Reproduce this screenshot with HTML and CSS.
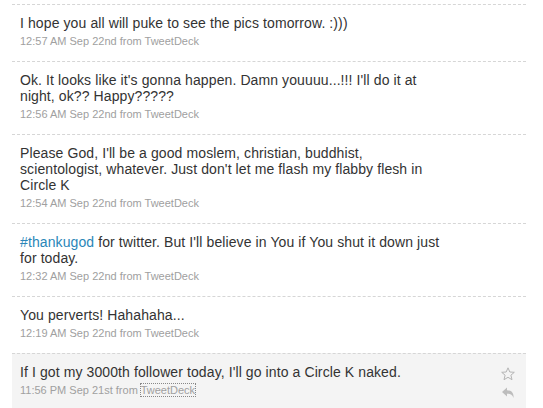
FILE: index.html
```html
<!DOCTYPE html>
<html>
<head>
<meta charset="utf-8">
<link rel="stylesheet" href="styles.css">
</head>
<body>
<ol class="timeline">
  <li class="status">
    <div class="body">
      <span class="content">I hope you all will puke to see the pics tomorrow. :)))</span>
      <span class="meta">12:57 AM Sep 22nd from <a class="src">TweetDeck</a></span>
    </div>
  </li>
  <li class="status">
    <div class="body">
      <span class="content">Ok. It looks like it's gonna happen. Damn youuuu...!!! I'll do it at night, ok?? Happy?????</span>
      <span class="meta">12:56 AM Sep 22nd from <a class="src">TweetDeck</a></span>
    </div>
  </li>
  <li class="status">
    <div class="body">
      <span class="content">Please God, I'll be a good moslem, christian, buddhist, scientologist, whatever. Just don't let me flash my flabby flesh in Circle K</span>
      <span class="meta">12:54 AM Sep 22nd from <a class="src">TweetDeck</a></span>
    </div>
  </li>
  <li class="status">
    <div class="body">
      <span class="content"><a class="tag">#thankugod</a> for twitter. But I'll believe in You if You shut it down just for today.</span>
      <span class="meta">12:32 AM Sep 22nd from <a class="src">TweetDeck</a></span>
    </div>
  </li>
  <li class="status">
    <div class="body">
      <span class="content">You perverts! Hahahaha...</span>
      <span class="meta">12:19 AM Sep 22nd from <a class="src">TweetDeck</a></span>
    </div>
  </li>
  <li class="status hover">
    <div class="body">
      <span class="content">If I got my 3000th follower today, I'll go into a Circle K naked.</span>
      <span class="meta">11:56 PM Sep 21st from <a class="src focus">TweetDeck</a></span>
    </div>
    <div class="actions">
      <svg class="star" width="14" height="14" viewBox="0 0 14 14"><path d="M7 0.8 L8.8 5 L13.3 5.3 L9.9 8.2 L11 12.7 L7 10.3 L3 12.7 L4.1 8.2 L0.7 5.3 L5.2 5 Z" fill="none" stroke="#b5b5b5" stroke-width="1"/></svg>
      <svg class="reply" width="14" height="16" viewBox="0 0 14 16"><path d="M1 5 L6 0.5 L6 3.2 C10 3.2 13 5.5 12.5 11 C11.5 7.5 9 6.8 6 6.8 L6 9.5 Z" fill="#bdbdbd"/></svg>
    </div>
  </li>
</ol>
</body>
</html>
```

FILE: styles.css
```css
html, body {
  margin: 0;
  padding: 0;
  background: #fff;
}
body {
  font-family: "Liberation Sans", Arial, sans-serif;
  color: #333;
  overflow: hidden;
}
.timeline {
  list-style: none;
  margin: 4px 0 0 12px;
  padding: 0;
  width: 514px;
}
.status {
  border-top: 1px dashed #d6d6d6;
  padding: 10px 8px 13px 8px;
  display: flex;
  justify-content: space-between;
}
.status.hover {
  background: #f4f4f4;
}
.body {
  width: 425px;
  display: flex;
  flex-direction: column;
  gap: 3px;
}
.content {
  font-size: 14px;
  line-height: 16px;
  letter-spacing: 0.1px;
}
.meta {
  font-size: 11px;
  line-height: 14px;
  color: #a0a0a0;
}
.src {
  color: #a0a0a0;
}
.src.focus {
  outline: 1px dotted #888;
}
.tag {
  color: #2a86b8;
}
.actions {
  display: flex;
  flex-direction: column;
  align-items: center;
  gap: 6px;
  padding-top: 3px;
  margin-right: 3px;
}
```
